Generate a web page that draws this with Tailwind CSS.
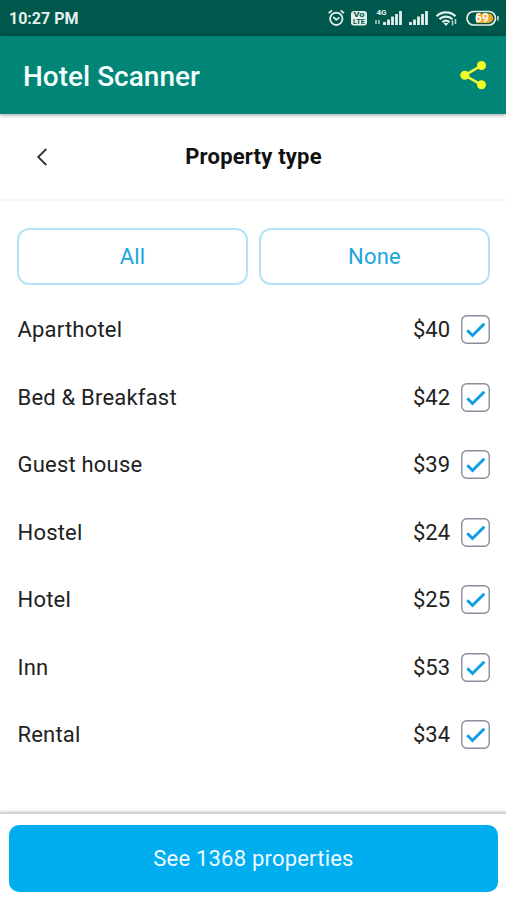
<!DOCTYPE html>
<html lang="en">
<head>
  <meta charset="UTF-8" />
  <meta name="viewport" content="width=device-width, initial-scale=1.0" />
  <title>Hotel Scanner</title>
  <script src="https://cdn.jsdelivr.net/npm/@tailwindcss/browser@4"></script>
</head>
<body class="bg-white font-['Roboto',sans-serif]">
  <div class="flex flex-col h-[900px] w-full overflow-hidden">

    <!-- Status bar -->
    <div class="h-9 shrink-0 bg-[#00574b] flex items-center justify-between pl-[9px] pr-[7px] text-[#e3f1ee]">
      <span class="text-base font-bold pt-0.5">10:27 PM</span>
      <svg class="w-[172px] h-6" viewBox="0 0 172 24" fill="none" stroke="currentColor">
        <!-- alarm -->
        <circle cx="9.3" cy="12.8" r="6.2" stroke-width="1.8" />
        <path d="M1.6 7.2 5 4.4M17 7.2l-3.4-2.8M6.2 11l3.1 2.8 3.1-2.4" stroke-width="1.7" />
        <!-- VoLTE -->
        <rect x="24" y="5" width="16" height="14.5" rx="3" fill="currentColor" stroke="none" />
        <text x="32" y="11.3" text-anchor="middle" font-size="6.5" font-weight="700" textLength="11" lengthAdjust="spacingAndGlyphs" fill="#00574b" stroke="none">Vo</text>
        <text x="32" y="18.2" text-anchor="middle" font-size="6.5" font-weight="700" textLength="12" lengthAdjust="spacingAndGlyphs" fill="#00574b" stroke="none">LTE</text>
        <!-- signal 1 -->
        <text x="49.5" y="9.3" font-size="8" font-weight="700" fill="currentColor" stroke="none">4G</text>
        <path d="M49 14v4M52 14v4" stroke-width="1.5" opacity=".8" />
        <path d="M57.5 19v-3M61.5 19v-5.5M65.5 19v-8.5M69.5 19V8M73.5 19V5" stroke-width="2.8" />
        <!-- signal 2 -->
        <path d="M83.5 19v-3M87.5 19v-5.5M91.5 19v-8.5M95.5 19V8M99.5 19V5" stroke-width="2.8" />
        <!-- wifi -->
        <path d="M109.5 10.3c5-5.3 14-5.3 19 0M112.5 13.3c3.5-3.6 9.5-3.6 13 0M115.5 16.2c2-2 5-2 7 0" stroke-width="2.3" />
        <path d="M116.5 17h5l-2.5 3z" fill="currentColor" stroke="none" />
        <path d="M125.5 14.5v5M128.5 13v5" stroke-width="1.6" opacity=".8" />
        <!-- battery -->
        <rect x="140" y="5.5" width="28.5" height="13.5" rx="6.7" stroke-width="1.7" />
        <path d="M149 7.5h12.5a4.7 4.7 0 0 1 0 9.5H149z" fill="#f5a623" stroke="none" />
        <path d="M171 10v4.5" stroke-width="1.4" />
        <text x="155" y="16.4" text-anchor="middle" font-size="12" font-weight="700" fill="#fff" stroke="none">69</text>
      </svg>
    </div>

    <!-- App bar -->
    <header class="h-[78px] shrink-0 bg-[#008577] flex items-center justify-between pl-[23px] pr-[19px] shadow-[0_1px_4px_rgba(0,0,0,0.4)] z-10">
      <h1 class="text-[28px] font-medium text-[#f4fffd] pt-[3px]">Hotel Scanner</h1>
      <svg class="w-7 h-[30px]" viewBox="0 0 28 30">
        <path d="M22.5 5.5 5.8 15.3l16.7 9.5" fill="none" stroke="#ecfb3c" stroke-width="2.6" />
        <g fill="#f3fb25">
          <circle cx="22.5" cy="5.5" r="4.5" />
          <circle cx="5.8" cy="15.3" r="4.5" />
          <circle cx="22.5" cy="24.8" r="4.5" />
        </g>
      </svg>
    </header>

    <!-- Page title -->
    <div class="h-[87px] shrink-0 border-b-2 border-[#f7f7f7] grid grid-cols-[85px_1fr_84px] items-center">
      <svg class="w-3 h-5 ml-9" viewBox="0 0 12 20" fill="none" stroke="#333" stroke-width="1.8">
        <path d="M10.3 2 2.2 10l8.1 8" />
      </svg>
      <h2 class="text-center text-[22px] font-bold tracking-[0.2px] text-[#111]">Property type</h2>
    </div>

    <!-- All / None -->
    <div class="flex shrink-0 gap-[11px] pl-[17px] pt-[27px] pr-4">
      <button class="flex-1 h-[57px] rounded-xl border-2 border-[#b5e3f3] text-[22px] tracking-[0.2px] text-[#1ba5dd]">All</button>
      <button class="flex-1 h-[57px] rounded-xl border-2 border-[#b5e3f3] text-[22px] tracking-[0.2px] text-[#1ba5dd]">None</button>
    </div>

    <!-- Property list -->
    <ul id="propertyList" class="flex-1 min-h-0 pt-[11px] pl-[17.5px] pr-4 text-[22px] text-[#222]"></ul>

    <!-- Footer -->
    <footer class="h-[88px] shrink-0 bg-white border-t-2 border-[#d2d2d2] shadow-[0_0_3px_rgba(0,0,0,0.25)] pt-[11px] pl-[9px] pr-2">
      <button class="w-full h-[67px] rounded-[10px] bg-[#00adef] text-[22px] tracking-[0.2px] text-[#edfaff]">See 1368 properties</button>
    </footer>
  </div>

  <script>
    const properties = [
      { name: "Aparthotel", price: 40 },
      { name: "Bed & Breakfast", price: 42 },
      { name: "Guest house", price: 39 },
      { name: "Hostel", price: 24 },
      { name: "Hotel", price: 25 },
      { name: "Inn", price: 53 },
      { name: "Rental", price: 34 }
    ];

    const list = document.getElementById("propertyList");

    properties.forEach(item => {
      const html = `
        <li class="h-[67.5px] flex items-center">
          <span class="flex-1 tracking-[0.2px]">${item.name.replace("&", "&amp;")}</span>
          <span class="mr-[11px]">$${item.price}</span>
          <svg class="w-[29px] h-[29px]" viewBox="0 0 29 29" fill="none">
            <rect x=".75" y=".75" width="27.5" height="27.5" rx="5" stroke="#8b8d9b" stroke-width="1.4" />
            <path d="M6.3 15.3l5.2 5.2L23.3 8.7" stroke="#109fe4" stroke-width="3" />
          </svg>
        </li>`;
      list.insertAdjacentHTML("beforeend", html);
    });
  </script>
</body>
</html>
